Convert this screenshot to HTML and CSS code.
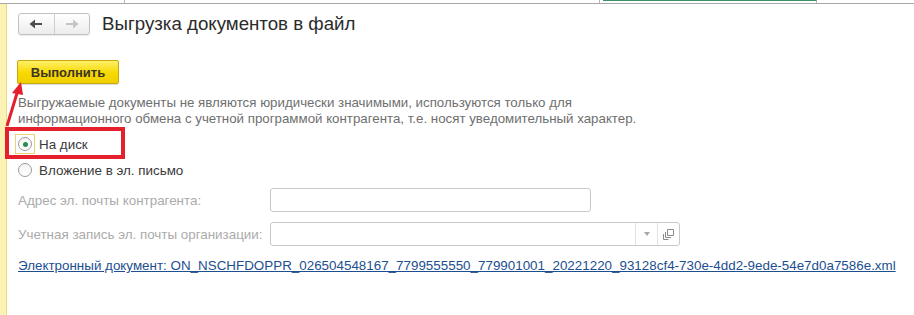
FILE: index.html
```html
<!DOCTYPE html>
<html>
<head>
<meta charset="utf-8">
<title>Выгрузка документов в файл</title>
<link rel="stylesheet" href="styles.css">
</head>
<body>
	<div class="tabs">
		<div class="tab tab-first"></div>
		<div class="tab tab-mid"></div>
		<div class="tab tab-active"></div>
		<div class="tab tab-rest"></div>
	</div>

	<div class="main">
		<div class="strip"></div>

		<div class="content">
			<div class="header">
				<div class="nav">
					<span class="nav-btn">
						<svg width="14" height="10" viewBox="0 0 14 10"><path d="M4 5h9" stroke="#4d4d4d" stroke-width="2"/><path d="M0.5 5L6 0.5v9z" fill="#4d4d4d"/></svg>
					</span>
					<span class="nav-btn">
						<svg width="14" height="10" viewBox="0 0 14 10"><path d="M1 5h9" stroke="#c4c4c4" stroke-width="2"/><path d="M13.5 5L8 0.5v9z" fill="#c4c4c4"/></svg>
					</span>
				</div>
				<h1 class="title">Выгрузка документов в файл</h1>
			</div>

			<div class="actions">
				<button class="run">Выполнить</button>
			</div>

			<p class="note">Выгружаемые документы не являются юридически значимыми, используются только для<br>информационного обмена с учетной программой контрагента, т.е. носят уведомительный характер.</p>

			<div class="radios">
				<label class="radio">
					<span class="focus"><span class="dot dot-on"></span></span>
					На диск
				</label>
				<label class="radio">
					<span class="focus nofocus"><span class="dot"></span></span>
					Вложение в эл. письмо
				</label>
			</div>

			<div class="fields">
				<div class="field">
					<span class="label">Адрес эл. почты контрагента:</span>
					<span class="input input-short"></span>
				</div>
				<div class="field">
					<span class="label">Учетная запись эл. почты организации:</span>
					<span class="input input-long">
						<span class="fill"></span>
						<span class="ibtn">
							<svg width="6" height="4" viewBox="0 0 6 4"><path d="M0 0h6L3 4z" fill="#a8a8a8"/></svg>
						</span>
						<span class="ibtn">
							<svg width="11" height="11" viewBox="0 0 11 11"><path d="M4.5 0.5h6v6h-6z M2.5 3v5.5h5.5 M0.5 5v5.5h5" fill="none" stroke="#8a8a8a" stroke-width="1"/></svg>
						</span>
					</span>
				</div>
			</div>

			<a class="doc-link" href="#">Электронный документ: ON_NSCHFDOPPR_026504548167_7799555550_779901001_20221220_93128cf4-730e-4dd2-9ede-54e7d0a7586e.xml</a>
		</div>
	</div>

	<!-- red annotation drawn over the form -->
	<div class="mark"></div>
	<svg class="arrow" width="30" height="50" viewBox="0 0 30 50">
		<path d="M4 46L15 10" stroke="#e3202b" stroke-width="3" fill="none"/>
		<path d="M18 2L9 13L20 15z" fill="#e3202b"/>
	</svg>
</body>
</html>
```

FILE: styles.css
```css
html, body {
	margin: 0;
	padding: 0;
	width: 914px;
	height: 315px;
	overflow: hidden;
	background: #fff;
	font-family: "Liberation Sans", Arial, sans-serif;
	font-size: 13.4px;
	color: #333;
	position: relative;
}

.tabs {
	display: flex;
	height: 3px;
	border-bottom: 1px solid #a8a8a8;
}
.tab {
	height: 3px;
	box-sizing: border-box;
}
.tab-first {
	width: 125px;
	border-right: 1px solid #b8b8b8;
}
.tab-mid {
	width: 475px;
	border-right: 1px solid #b8b8b8;
}
.tab-active {
	width: 214px;
	border-right: 1px solid #b8b8b8;
	border-top: 1px solid #3f8f68;
	margin-left: 3px;
}
.tab-rest {
	flex: 1;
}

.main {
	display: flex;
	height: 311px;
}
.strip {
	width: 6px;
	background: #fcf2b4;
	border-right: 1px solid #e9d983;
}
.content {
	flex: 1;
	padding: 9px 0 0 11px;
	display: flex;
	flex-direction: column;
	align-items: flex-start;
}

.header {
	display: flex;
	align-items: center;
	height: 22px;
}
.nav {
	display: flex;
	width: 72px;
	height: 22px;
	box-sizing: border-box;
	border: 1px solid #c2c2c2;
	border-radius: 3px;
	background: linear-gradient(#ffffff, #ececec);
	box-shadow: 0 1px 1px rgba(0,0,0,0.08);
}
.nav-btn {
	flex: 1;
	display: flex;
	align-items: center;
	justify-content: center;
}
.nav-btn + .nav-btn {
	border-left: 1px solid #cfcfcf;
}
.title {
	margin: 0 0 0 12px;
	font-size: 18.7px;
	font-weight: normal;
	color: #2b2b2b;
	line-height: 22px;
}

.actions {
	margin-top: 25px;
	margin-left: -1px;
}
.run {
	width: 102px;
	height: 24px;
	border: 1px solid #c9aa0c;
	border-radius: 2px;
	background: linear-gradient(#fff06a, #f7d900 55%, #f0cf00);
	box-shadow: 0 1px 1px rgba(0,0,0,0.15);
	font-family: "Liberation Sans", Arial, sans-serif;
	font-size: 13px;
	font-weight: bold;
	color: #3b3426;
	padding: 0;
}

.note {
	margin: 11px 0 0 0;
	line-height: 16px;
	font-size: 13.3px;
	color: #6f6f6f;
}

.radios {
	margin-top: 7px;
	display: flex;
	flex-direction: column;
	gap: 6px;
}
.radio {
	display: flex;
	align-items: center;
	height: 20px;
	margin-left: -3px;
	color: #3a3a3a;
}
.focus {
	width: 20px;
	height: 20px;
	box-sizing: border-box;
	border: 1px solid #ecd277;
	display: flex;
	align-items: center;
	justify-content: center;
	margin-right: 4px;
}
.nofocus {
	border-color: transparent;
}
.dot {
	width: 14px;
	height: 14px;
	box-sizing: border-box;
	border: 1px solid #9b9b9b;
	border-radius: 50%;
	background: linear-gradient(#f4f4f4, #ffffff);
	display: flex;
	align-items: center;
	justify-content: center;
}
.dot-on::after {
	content: "";
	width: 5px;
	height: 5px;
	border-radius: 50%;
	background: #2f8a52;
}

.fields {
	margin-top: 8px;
	display: flex;
	flex-direction: column;
	gap: 10px;
}
.field {
	display: flex;
	align-items: center;
	height: 24px;
}
.label {
	width: 252px;
	color: #ababab;
}
.input {
	height: 24px;
	box-sizing: border-box;
	border: 1px solid #c9c9c9;
	border-radius: 3px;
	background: #fff;
	display: flex;
}
.input-short {
	width: 321px;
}
.input-long {
	width: 410px;
}
.fill {
	flex: 1;
}
.ibtn {
	width: 21px;
	border-left: 1px solid #e2e2e2;
	display: flex;
	align-items: center;
	justify-content: center;
}

.doc-link {
	margin-top: 12px;
	line-height: 16px;
	color: #1d4f8f;
	text-decoration: underline;
	white-space: nowrap;
}

.mark {
	position: absolute;
	left: 5px;
	top: 127px;
	width: 112px;
	height: 24px;
	border: 4px solid #e3202b;
}
.arrow {
	position: absolute;
	left: 3px;
	top: 80px;
}
```
